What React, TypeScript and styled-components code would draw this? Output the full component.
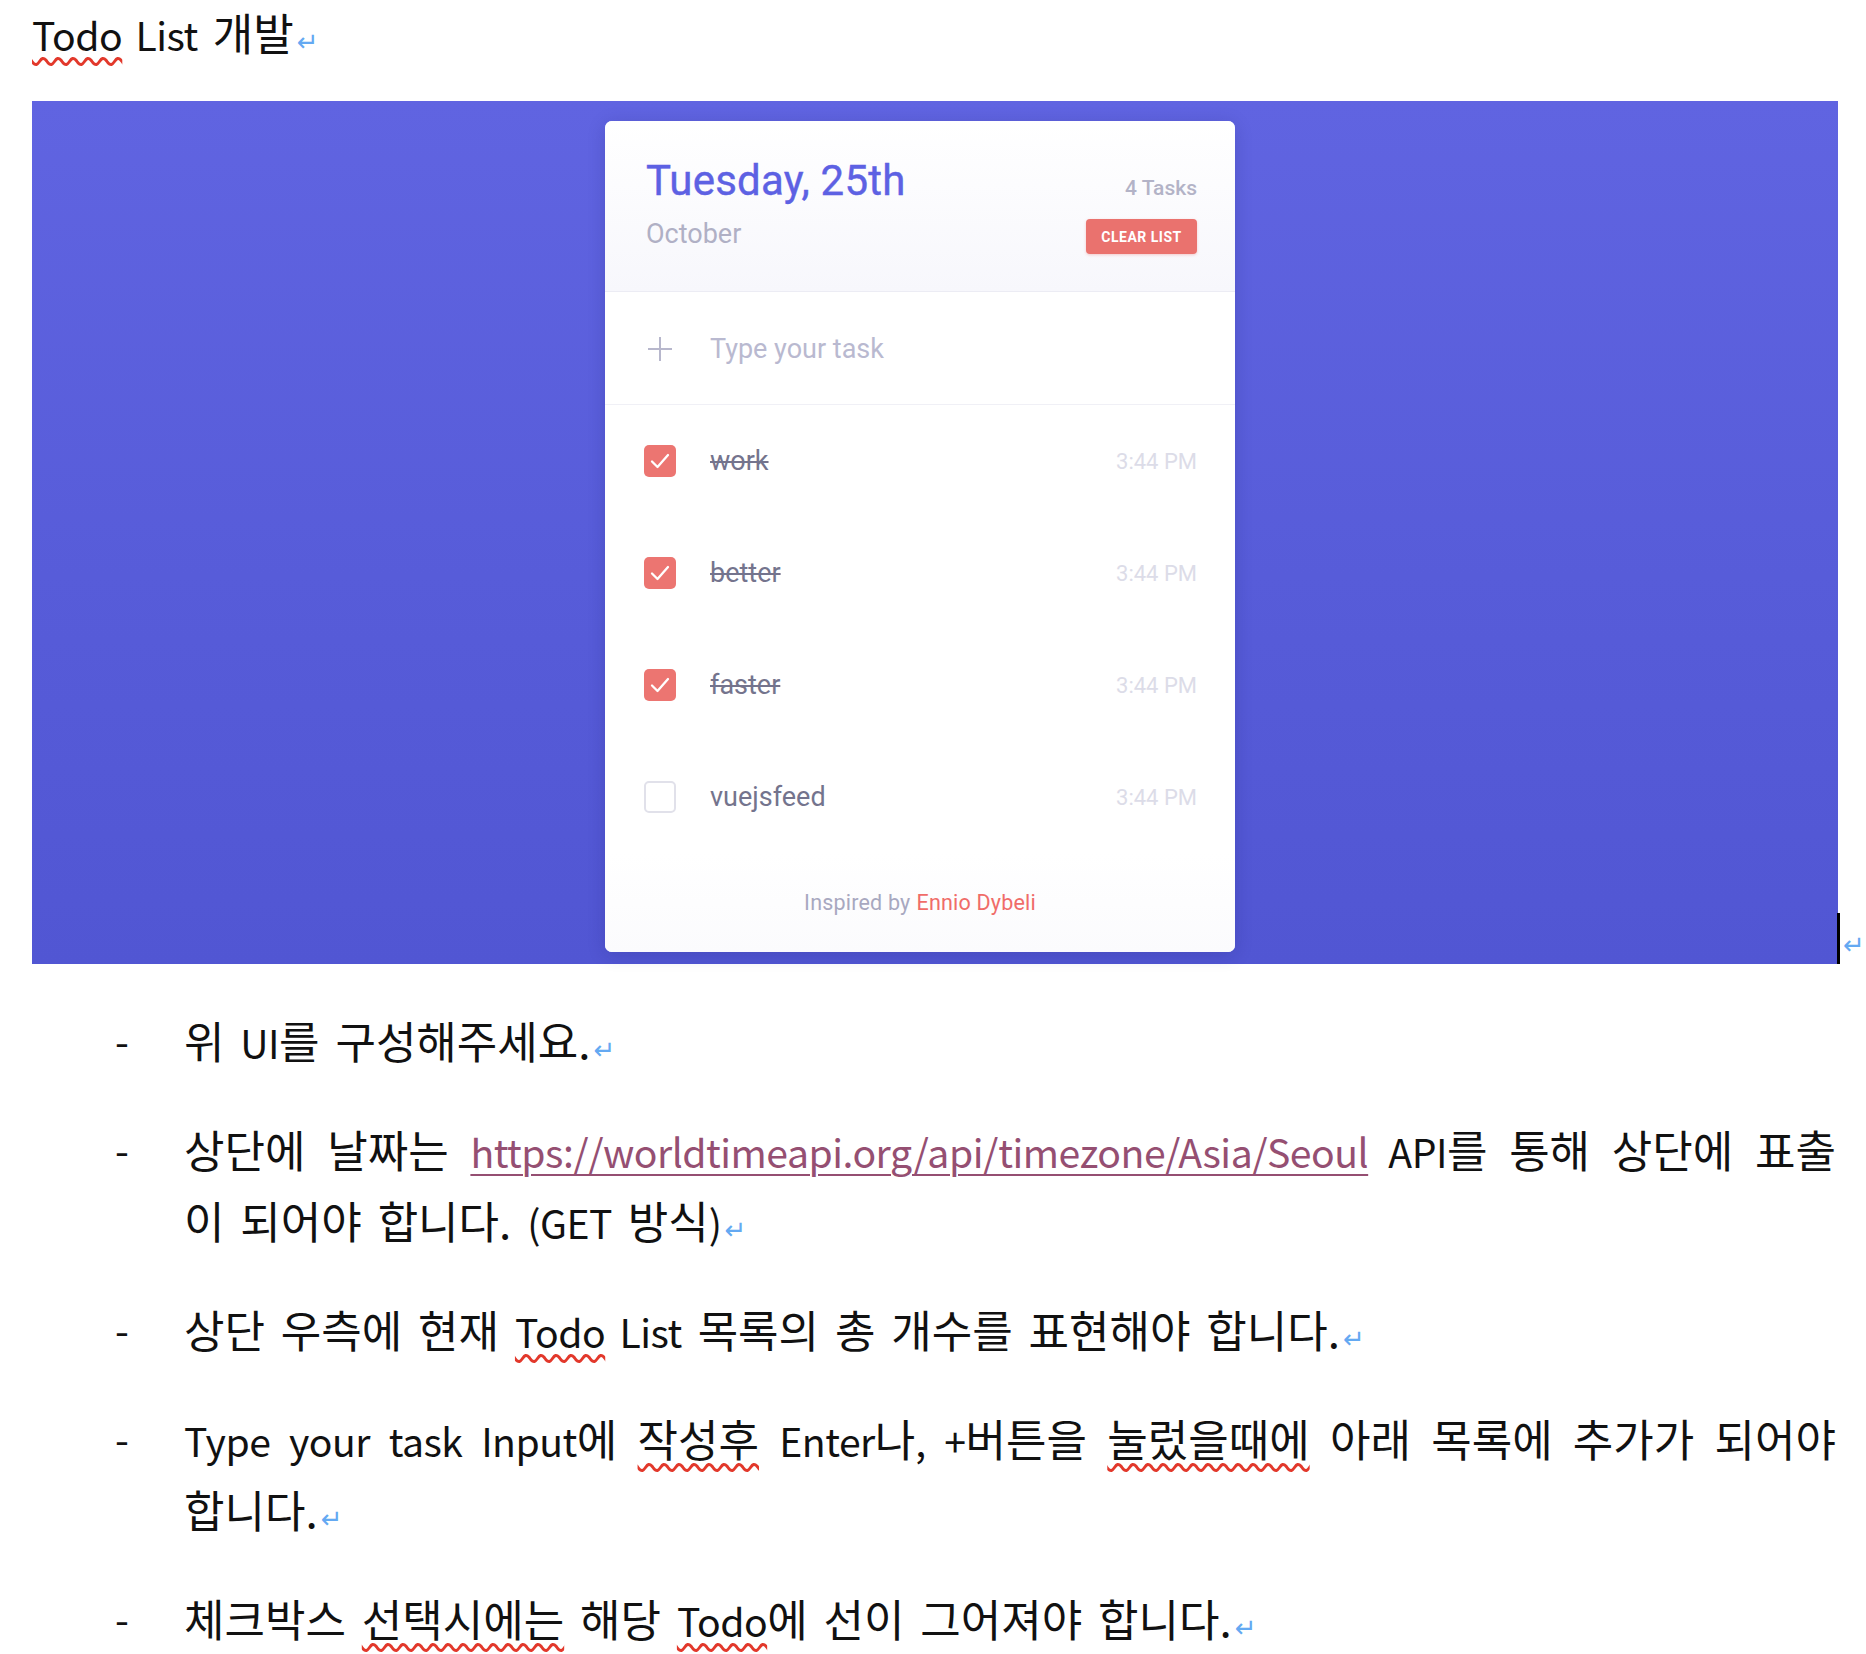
import React, { useState } from "react";
import styled, { createGlobalStyle, css } from "styled-components";

const GlobalStyle = createGlobalStyle`
  html, body { margin: 0; padding: 0; background: #ffffff; }
  body {
    font-family: "Noto Sans CJK KR", "Noto Sans", sans-serif;
    color: #111111;
  }
  * { box-sizing: border-box; }
`;

const Page = styled.div`
  width: 1866px;
  padding: 0 0 20px 32px;
`;

const DocTitle = styled.h1`
  margin: 0;
  height: 66px;
  font-size: 44px;
  font-weight: 400;
  line-height: 64px;
  word-spacing: 5px;
  color: #111111;
`;

const Latin = styled.span`
  font-size: 0.89em;
  letter-spacing: -0.5px;
`;

const Squiggle = styled.span`
  text-decoration: underline wavy #e2382b;
  text-decoration-thickness: 2.6px;
  text-underline-offset: 6px;
`;

const ReturnMark = styled.span`
  font-family: "DejaVu Sans", sans-serif;
  font-size: 26px;
  line-height: 1;
  color: #64a9f2;
  margin-left: 3px;
  word-spacing: 0;
  letter-spacing: 0;
`;

const Figure = styled.div`
  display: flex;
  align-items: flex-end;
  margin-top: 35px;
`;

const AppShot = styled.div`
  width: 1806px;
  height: 863px;
  padding: 20px 0 0 573px;
  background: linear-gradient(180deg, #6064e1 0%, #575cd9 55%, #5156d3 100%);
  display: flex;
  align-items: flex-start;
`;

const Cursor = styled.span`
  display: block;
  width: 3px;
  height: 51px;
  background: #000000;
  margin-left: -1px;
`;

const FigureMark = styled(ReturnMark)`
  display: block;
  margin-bottom: 6px;
`;

const Card = styled.div`
  width: 630px;
  height: 831px;
  background: #ffffff;
  border-radius: 7px;
  box-shadow: 0 3px 18px rgba(20, 20, 90, 0.18);
  overflow: hidden;
  display: flex;
  flex-direction: column;
  font-family: Roboto, "Noto Sans", sans-serif;
`;

const CardHeader = styled.div`
  height: 171px;
  flex: none;
  display: flex;
  justify-content: space-between;
  padding: 36px 38px 0 41px;
  background: linear-gradient(180deg, #ffffff 0%, #f7f7fc 100%);
  border-bottom: 1px solid #ececf4;
`;

const DateBlock = styled.div`
  display: flex;
  flex-direction: column;
`;

const DateTitle = styled.div`
  font-size: 42px;
  line-height: 48px;
  font-weight: 400;
  color: #5d61e3;
  letter-spacing: 0.2px;
  -webkit-text-stroke: 0.4px #5d61e3;
`;

const MonthLabel = styled.div`
  margin-top: 12px;
  font-size: 27px;
  line-height: 34px;
  color: #b0b0c5;
`;

const MetaBlock = styled.div`
  display: flex;
  flex-direction: column;
  align-items: flex-end;
  padding-top: 19px;
`;

const TaskCount = styled.div`
  font-size: 21px;
  line-height: 24px;
  font-weight: 500;
  color: #b3b3c7;
`;

const ClearButton = styled.button`
  margin-top: 19px;
  width: 111px;
  height: 35px;
  padding: 0;
  border: none;
  border-radius: 4px;
  background: #ea726e;
  color: #ffffff;
  font-family: Roboto, sans-serif;
  font-size: 14px;
  font-weight: 700;
  letter-spacing: 0.5px;
  text-transform: uppercase;
  cursor: pointer;
  box-shadow: 0 1px 3px rgba(234, 114, 110, 0.35);
`;

const InputRow = styled.label`
  height: 113px;
  flex: none;
  display: flex;
  align-items: center;
  gap: 36px;
  padding: 2px 38px 0 41px;
  border-bottom: 1px solid #f0f0f6;
  cursor: text;
`;

const PlusButton = styled.span`
  display: flex;
  cursor: pointer;
`;

const PlusIcon = () => (
  <svg width="28" height="28" viewBox="0 0 28 28" aria-hidden="true">
    <path d="M14 2 V26 M2 14 H26" stroke="#b7b7cc" strokeWidth="2" fill="none" />
  </svg>
);

const TaskInput = styled.input`
  flex: 1;
  border: none;
  outline: none;
  background: transparent;
  font-family: Roboto, sans-serif;
  font-size: 27px;
  color: #6e6e86;
  padding: 0;
  &::placeholder {
    color: #b9b9d0;
    opacity: 1;
  }
`;

const TaskList = styled.ul`
  list-style: none;
  margin: 0;
  padding: 0;
  flex: 1;
`;

const TaskRow = styled.li`
  height: 112px;
  display: flex;
  align-items: center;
  padding: 0 38px 0 39px;
`;

const CheckBox = styled.button<{ $checked: boolean }>`
  width: 32px;
  height: 32px;
  flex: none;
  padding: 0;
  border-radius: 5px;
  display: flex;
  align-items: center;
  justify-content: center;
  cursor: pointer;
  ${({ $checked }) =>
    $checked
      ? css`
          background: #ec7571;
          border: none;
        `
      : css`
          background: #ffffff;
          border: 2px solid #e1e1ea;
        `}
`;

const TaskText = styled.span<{ $done: boolean }>`
  flex: 1;
  margin-left: 34px;
  font-size: 27px;
  color: #74748d;
  ${({ $done }) =>
    $done &&
    css`
      text-decoration: line-through;
      text-decoration-thickness: 2px;
    `}
`;

const TaskTime = styled.span`
  font-size: 22px;
  color: #dcdce8;
`;

const CardFooter = styled.div`
  height: 99px;
  flex: none;
  display: flex;
  align-items: center;
  justify-content: center;
  background: linear-gradient(180deg, #ffffff 0%, #fbfbfd 100%);
  font-size: 21.5px;
  color: #a8a8c0;
  letter-spacing: 0.2px;
`;

const FooterLink = styled.span`
  color: #f06c69;
  margin-left: 6px;
`;

const Requirements = styled.ul`
  list-style: none;
  margin: 41px 0 0;
  padding: 0 0 0 83px;
  display: flex;
  flex-direction: column;
  gap: 38px;
`;

const Req = styled.li`
  display: flex;
  font-size: 44px;
  line-height: 71px;
  word-spacing: 6px;
`;

const Bullet = styled.span`
  width: 69px;
  flex: none;
  font-size: 40px;
`;

const ReqBody = styled.div`
  width: 1652px;
`;

const ReqLine = styled.div<{ $justify?: boolean }>`
  height: 71px;
  white-space: nowrap;
  ${({ $justify }) =>
    $justify &&
    css`
      word-spacing: 0;
      text-align: justify;
      text-align-last: justify;
    `}
`;

const DocLink = styled.a`
  color: #954f72;
  text-decoration: underline;
  text-decoration-thickness: 2px;
  text-underline-offset: 6px;
  word-spacing: 0;
`;

type Task = { id: number; text: string; done: boolean; time: string };

const CheckMark = () => (
  <svg width="32" height="32" viewBox="0 0 32 32" aria-hidden="true">
    <path
      d="M8 16.5 L13.5 22 L24 10"
      stroke="#ffffff"
      strokeWidth="2.3"
      fill="none"
      strokeLinecap="round"
      strokeLinejoin="round"
    />
  </svg>
);

export default function App() {
  const [tasks, setTasks] = useState<Task[]>([
    { id: 1, text: "work", done: true, time: "3:44 PM" },
    { id: 2, text: "better", done: true, time: "3:44 PM" },
    { id: 3, text: "faster", done: true, time: "3:44 PM" },
    { id: 4, text: "vuejsfeed", done: false, time: "3:44 PM" },
  ]);
  const [draft, setDraft] = useState("");

  const addTask = () => {
    const text = draft.trim();
    if (!text) return;
    setTasks((t) => [...t, { id: Date.now(), text, done: false, time: "3:44 PM" }]);
    setDraft("");
  };

  const toggle = (id: number) =>
    setTasks((t) => t.map((x) => (x.id === id ? { ...x, done: !x.done } : x)));

  return (
    <>
      <GlobalStyle />
      <Page>
        <DocTitle>
          <Latin>
            <Squiggle>Todo</Squiggle> List
          </Latin>{" "}
          개발<ReturnMark>↵</ReturnMark>
        </DocTitle>

        <Figure>
          <AppShot>
            <Card>
              <CardHeader>
                <DateBlock>
                  <DateTitle>Tuesday, 25th</DateTitle>
                  <MonthLabel>October</MonthLabel>
                </DateBlock>
                <MetaBlock>
                  <TaskCount>{tasks.length} Tasks</TaskCount>
                  <ClearButton onClick={() => setTasks([])}>Clear list</ClearButton>
                </MetaBlock>
              </CardHeader>
              <InputRow>
                <PlusButton onClick={addTask}>
                  <PlusIcon />
                </PlusButton>
                <TaskInput
                  placeholder="Type your task"
                  value={draft}
                  onChange={(e) => setDraft(e.target.value)}
                  onKeyDown={(e) => {
                    if (e.key === "Enter") addTask();
                  }}
                />
              </InputRow>
              <TaskList>
                {tasks.map((t) => (
                  <TaskRow key={t.id}>
                    <CheckBox $checked={t.done} onClick={() => toggle(t.id)} aria-label="toggle">
                      {t.done && <CheckMark />}
                    </CheckBox>
                    <TaskText $done={t.done}>{t.text}</TaskText>
                    <TaskTime>{t.time}</TaskTime>
                  </TaskRow>
                ))}
              </TaskList>
              <CardFooter>
                Inspired by<FooterLink>Ennio Dybeli</FooterLink>
              </CardFooter>
            </Card>
          </AppShot>
          <Cursor />
          <FigureMark>↵</FigureMark>
        </Figure>

        <Requirements>
          <Req>
            <Bullet>-</Bullet>
            <ReqBody>
              <ReqLine>
                위 <Latin>UI</Latin>를 구성해주세요.<ReturnMark>↵</ReturnMark>
              </ReqLine>
            </ReqBody>
          </Req>
          <Req>
            <Bullet>-</Bullet>
            <ReqBody>
              <ReqLine $justify>
                상단에 날짜는{" "}
                <Latin>
                  <DocLink href="#">https://worldtimeapi.org/api/timezone/Asia/Seoul</DocLink> API
                </Latin>
                를 통해 상단에 표출
              </ReqLine>
              <ReqLine>
                이 되어야 합니다. <Latin>(GET</Latin> 방식<Latin>)</Latin>
                <ReturnMark>↵</ReturnMark>
              </ReqLine>
            </ReqBody>
          </Req>
          <Req>
            <Bullet>-</Bullet>
            <ReqBody>
              <ReqLine>
                상단 우측에 현재{" "}
                <Latin>
                  <Squiggle>Todo</Squiggle> List
                </Latin>{" "}
                목록의 총 개수를 표현해야 합니다.
                <ReturnMark>↵</ReturnMark>
              </ReqLine>
            </ReqBody>
          </Req>
          <Req>
            <Bullet>-</Bullet>
            <ReqBody>
              <ReqLine $justify>
                <Latin>Type your task Input</Latin>에 <Squiggle>작성후</Squiggle> <Latin>Enter</Latin>나
                <Latin>, +</Latin>버튼을 <Squiggle>눌렀을때에</Squiggle> 아래 목록에 추가가 되어야
              </ReqLine>
              <ReqLine>
                합니다.<ReturnMark>↵</ReturnMark>
              </ReqLine>
            </ReqBody>
          </Req>
          <Req>
            <Bullet>-</Bullet>
            <ReqBody>
              <ReqLine>
                체크박스 <Squiggle>선택시에는</Squiggle> 해당{" "}
                <Squiggle>
                  <Latin>Todo</Latin>
                </Squiggle>
                에 선이 그어져야 합니다.<ReturnMark>↵</ReturnMark>
              </ReqLine>
            </ReqBody>
          </Req>
        </Requirements>
      </Page>
    </>
  );
}
